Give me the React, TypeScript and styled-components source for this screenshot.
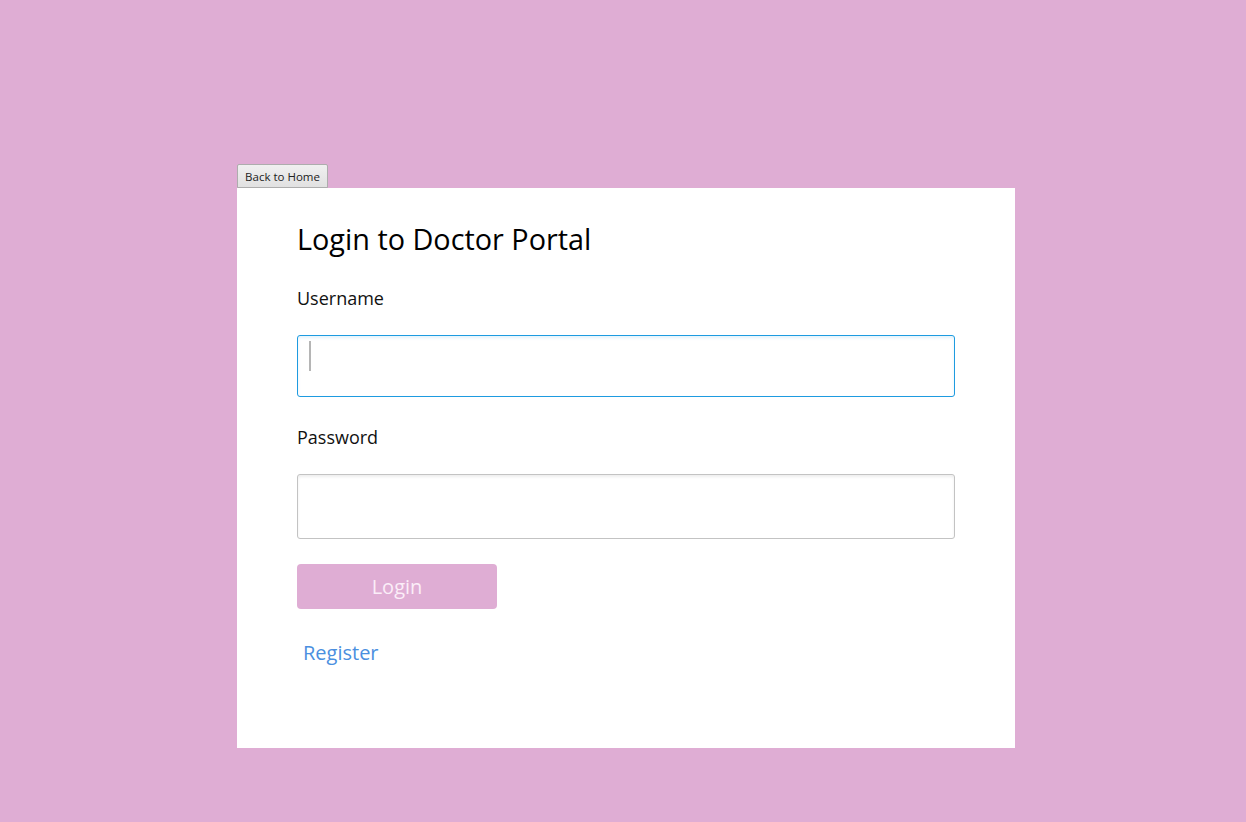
import React from "react";
import styled, { createGlobalStyle } from "styled-components";

const Global = createGlobalStyle`
  html, body { margin: 0; padding: 0; background: #dfadd4; }
  body { font-family: "Open Sans", "Noto Sans", sans-serif; }
`;

const Page = styled.div`
  width: 1246px;
  height: 822px;
  background: #dfadd4;
  display: flex;
  flex-direction: column;
  align-items: flex-start;
  padding: 164px 0 0 237px;
  box-sizing: border-box;
`;

const BackButton = styled.button`
  height: 24px;
  width: 91px;
  padding: 0;
  margin: 0;
  font-family: "Open Sans", sans-serif;
  font-size: 11.5px;
  color: #222;
  background: linear-gradient(#f0f0f0, #e1e1e1);
  border: 1px solid #adadad;
  border-radius: 2px 2px 0 0;
  cursor: pointer;
`;

const Card = styled.div`
  width: 778px;
  height: 560px;
  background: #fff;
  box-sizing: border-box;
  padding: 29px 60px 0 60px;
  display: flex;
  flex-direction: column;
`;

const Title = styled.h1`
  margin: 0;
  font-family: "Open Sans", sans-serif;
  font-weight: 400;
  font-size: 28.8px;
  line-height: 44px;
  color: #000;
`;

const Label = styled.label<{ $top: number }>`
  margin-top: ${(p) => p.$top}px;
  font-size: 18px;
  line-height: 24px;
  color: #111;
`;

const Field = styled.div<{ $top: number }>`
  position: relative;
  margin-top: ${(p) => p.$top}px;
`;

const Input = styled.input<{ $focused?: boolean; $h: number }>`
  display: block;
  width: 658px;
  height: ${(p) => p.$h}px;
  box-sizing: border-box;
  border: 1px solid ${(p) => (p.$focused ? "#1e9be0" : "#c3c3c3")};
  border-radius: 3px;
  background: #fff;
  outline: none;
  box-shadow: ${(p) =>
    p.$focused
      ? "inset 0 2px 3px rgba(30,155,224,0.12)"
      : "inset 0 2px 3px rgba(0,0,0,0.07)"};
  font-size: 18px;
  padding: 0 12px;
`;

const Caret = styled.span`
  position: absolute;
  left: 12px;
  top: 6px;
  width: 2px;
  height: 30px;
  background: #b5b5b5;
`;

const LoginButton = styled.button`
  margin-top: 25px;
  width: 200px;
  height: 45px;
  border: none;
  border-radius: 4px;
  background: #dfadd4;
  color: #fbeef8;
  font-family: "Open Sans", sans-serif;
  font-size: 20px;
  cursor: pointer;
`;

const RegisterLink = styled.a`
  margin-top: 30px;
  margin-left: 6px;
  font-size: 20px;
  line-height: 28px;
  color: #4a8fe0;
  text-decoration: none;
  align-self: flex-start;
`;

export default function App() {
  return (
    <>
      <Global />
      <Page>
        <BackButton>Back to Home</BackButton>
        <Card>
          <Title>Login to Doctor Portal</Title>
          <Label $top={25}>Username</Label>
          <Field $top={25}>
            <Input $focused $h={62} />
            <Caret />
          </Field>
          <Label $top={28}>Password</Label>
          <Field $top={25}>
            <Input type="password" $h={65} />
          </Field>
          <LoginButton>Login</LoginButton>
          <RegisterLink href="#">Register</RegisterLink>
        </Card>
      </Page>
    </>
  );
}
